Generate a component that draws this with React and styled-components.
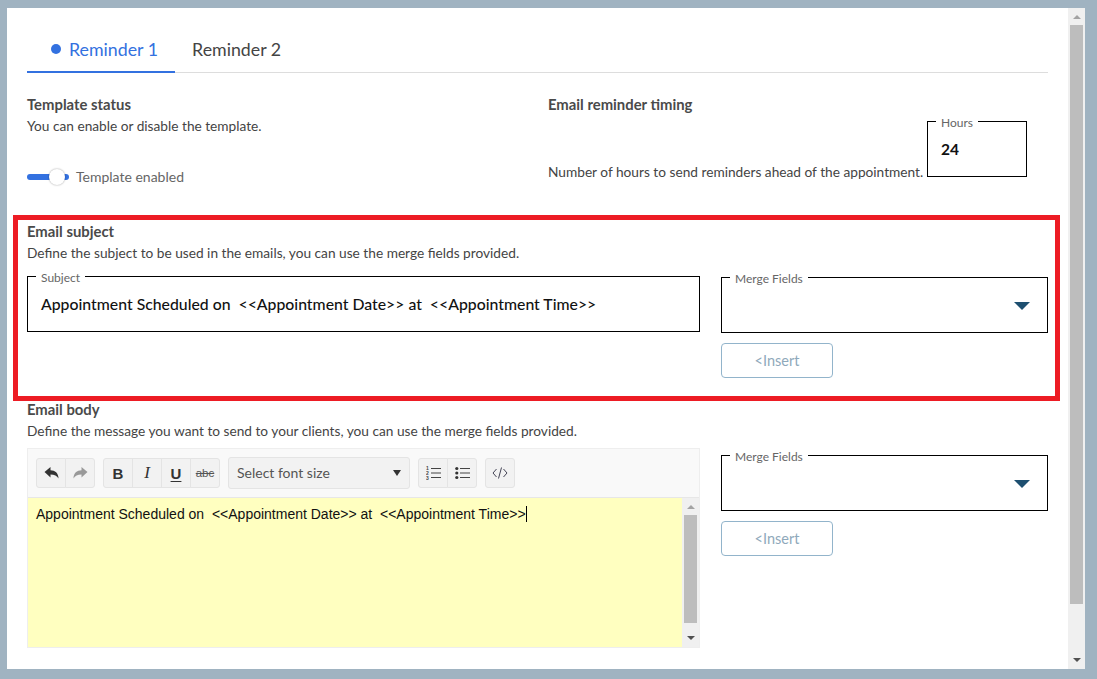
import React from "react";
import styled, { createGlobalStyle } from "styled-components";

const GlobalStyle = createGlobalStyle`
  html, body {
    margin: 0;
    height: 100%;
    overflow: hidden;
    background: #a0b3c1;
    font-family: Lato, "Open Sans", sans-serif;
    color: #444;
  }
`;

const Page = styled.div`
  box-sizing: border-box;
  width: 1097px;
  height: 679px;
  padding: 8px 12px 10px 7px;
`;

const Panel = styled.div`
  display: flex;
  height: 100%;
  background: #fff;
`;

const Content = styled.div`
  flex: 1;
  min-width: 0;
  padding: 0 20px;
  overflow: hidden;
`;

const Tabs = styled.div`
  display: flex;
  height: 65px;
  box-sizing: border-box;
  border-bottom: 1px solid #ddd;
`;

const Tab = styled.div`
  display: flex;
  align-items: center;
  gap: 8px;
  box-sizing: border-box;
  height: 65px;
  padding: 18px 17px 0 ${({ $active }) => ($active ? "24px" : "17px")};
  font-size: 17.8px;
  color: ${({ $active }) => ($active ? "#3371e0" : "#444")};
  border-bottom: 2px solid ${({ $active }) => ($active ? "#3371e0" : "transparent")};
`;

const Dot = styled.span`
  width: 10px;
  height: 10px;
  border-radius: 50%;
  background: #3371e0;
`;

const TopGrid = styled.div`
  display: grid;
  grid-template-columns: 521px 1fr;
  height: 142px;
  padding-top: 23px;
  box-sizing: border-box;
`;

const Column = styled.div`
  display: flex;
  flex-direction: column;
`;

const Heading = styled.div`
  font-size: 14.85px;
  font-weight: 700;
  line-height: 16px;
  color: #4a4a4a;
`;

const Hint = styled.div`
  font-size: 13.7px;
  line-height: 20px;
  margin-top: 4px;
  color: #444;
`;

const ToggleRow = styled.div`
  display: flex;
  align-items: center;
  gap: 7px;
  margin-top: 32px;
  font-size: 14px;
  color: #666;
`;

const Track = styled.div`
  position: relative;
  width: 42px;
  height: 6px;
  border-radius: 3px;
  background: #3371e0;
`;

const Knob = styled.div`
  position: absolute;
  left: 22px;
  top: -5px;
  width: 16px;
  height: 16px;
  border-radius: 50%;
  background: #fff;
  box-shadow: 0 0 2px rgba(0, 0, 0, 0.4);
`;

const TimingRow = styled.div`
  display: flex;
  align-items: flex-end;
`;

const TimingHint = styled(Hint)`
  flex: none;
  width: 379px;
  margin: 0 0 -5px;
  white-space: nowrap;
`;

const Field = styled.fieldset`
  box-sizing: border-box;
  margin: 0;
  padding: 0 13px;
  width: ${({ $width }) => $width || "auto"};
  height: 65px;
  border: 1px solid #000;
  min-width: 0;
`;

const Legend = styled.legend`
  margin-left: -5px;
  padding: 4px 5px 0;
  font-size: 12px;
  line-height: 14px;
  color: #666;
`;

const FieldValue = styled.div`
  font-size: ${({ $size }) => $size || 15.8}px;
  font-weight: ${({ $weight }) => $weight || 500};
  line-height: 20px;
  margin-top: 9px;
  color: #111;
  white-space: pre;
`;

const SubjectBox = styled.section`
  box-sizing: border-box;
  height: 186px;
  margin: 0 -12px 0 -14px;
  padding: 3px 7px 0 9px;
  border: 5px solid #ed1c24;
`;

const FormRow = styled.div`
  display: grid;
  grid-template-columns: 673px 327px;
  column-gap: 21px;
  margin-top: ${({ $top }) => $top}px;
`;

const MergeColumn = styled.div`
  display: flex;
  flex-direction: column;
  align-items: flex-start;
  gap: 10px;
  margin-top: ${({ $top }) => $top}px;
`;

const Caret = styled.div`
  margin: 16px 4px 0 auto;
  width: 0;
  height: 0;
  border-left: 8px solid transparent;
  border-right: 8px solid transparent;
  border-top: 8px solid #1d4f70;
`;

const InsertButton = styled.button`
  width: 112px;
  height: 35px;
  background: #fff;
  border: 1px solid #92b4cb;
  border-radius: 4px;
  font-family: inherit;
  font-size: 14.5px;
  color: #8fa9bb;
`;

const Editor = styled.div`
  box-sizing: border-box;
  height: 200px;
  border: 1px solid #eee;
  display: flex;
  flex-direction: column;
`;

const Toolbar = styled.div`
  display: flex;
  align-items: center;
  gap: 8px;
  height: 49px;
  box-sizing: border-box;
  padding: 0 8px;
  background: #f9f9f9;
  border-bottom: 1px solid #e7e7e7;
`;

const BtnGroup = styled.div`
  display: flex;
`;

const ToolBtn = styled.div`
  box-sizing: border-box;
  display: flex;
  align-items: center;
  justify-content: center;
  width: 30px;
  height: 30px;
  margin-left: -1px;
  background: #f2f2f2;
  border: 1px solid #e4e4e4;
  color: #333;
  font-family: "Liberation Sans", Arial, sans-serif;
  font-size: 15px;
  &:first-child { margin-left: 0; border-radius: 3px 0 0 3px; }
  &:last-child { border-radius: 0 3px 3px 0; }
  &:only-child { border-radius: 3px; }
`;

const BoldGlyph = styled.span`
  font-weight: 700;
`;

const ItalicGlyph = styled.span`
  font-style: italic;
  font-family: "Liberation Serif", serif;
  font-size: 17px;
`;

const UnderGlyph = styled.span`
  font-weight: 700;
  text-decoration: underline;
  text-underline-offset: 2px;
`;

const StrikeGlyph = styled.span`
  font-size: 11.5px;
  text-decoration: line-through;
  color: #555;
`;

const FontSelect = styled.div`
  box-sizing: border-box;
  display: flex;
  align-items: center;
  justify-content: space-between;
  width: 182px;
  height: 32px;
  padding: 0 8px 1px;
  background: #f2f2f2;
  border: 1px solid #e4e4e4;
  border-radius: 3px;
  font-size: 14px;
  color: #555;
`;

const SelectCaret = styled.span`
  width: 0;
  height: 0;
  border-left: 4px solid transparent;
  border-right: 4px solid transparent;
  border-top: 6px solid #333;
`;

const EditArea = styled.div`
  flex: 1;
  min-height: 0;
  display: flex;
  background: #ffffc0;
`;

const EditText = styled.div`
  flex: 1;
  padding: 8px;
  font-family: "Liberation Sans", Arial, sans-serif;
  font-size: 14px;
  line-height: 17px;
  color: #111;
  white-space: pre;
`;

const TextCursor = styled.span`
  border-left: 1px solid #000;
`;

const ScrollTrack = styled.div`
  flex: none;
  display: flex;
  flex-direction: column;
  align-items: center;
  box-sizing: border-box;
  width: 17px;
  background: #f0f0f0;
  padding: 7px 0;
`;

const ScrollThumb = styled.div`
  width: 13px;
  height: ${({ $height }) => $height}px;
  margin-top: 6px;
  background: #bdbdbd;
`;

const ScrollArrow = styled.div`
  width: 0;
  height: 0;
  border-left: 4px solid transparent;
  border-right: 4px solid transparent;
  ${({ $up }) => ($up ? "border-bottom: 4px solid #a3a3a3;" : "border-top: 4px solid #505050;")}
`;

const Spacer = styled.div`
  flex: 1;
`;

const ReplyIcon = ({ flip, color }) => (
  <svg width="15" height="12" viewBox="0 0 15 12" fill={color} style={flip ? { transform: "scaleX(-1)" } : undefined}>
    <path d="M0.5 5 6.5 0V3.2C11 3.2 14.5 6 14.5 11.5 13 8.8 10.5 7.4 6.5 7.4V10.5Z" />
  </svg>
);

const OrderedIcon = () => (
  <svg width="15" height="14" viewBox="0 0 15 14" fill="#444" stroke="none">
    <text x="0" y="4.4" fontSize="5" fontWeight="700" fontFamily="Liberation Sans">1</text>
    <text x="0" y="9" fontSize="5" fontWeight="700" fontFamily="Liberation Sans">2</text>
    <text x="0" y="13.6" fontSize="5" fontWeight="700" fontFamily="Liberation Sans">3</text>
    <path d="M5 2.5h10M5 7h10M5 11.5h10" stroke="#444" strokeWidth="1" />
  </svg>
);

const BulletIcon = () => (
  <svg width="15" height="14" viewBox="0 0 15 14" fill="#333">
    <circle cx="1.8" cy="2.5" r="1.6" />
    <circle cx="1.8" cy="7" r="1.6" />
    <circle cx="1.8" cy="11.5" r="1.6" />
    <path d="M5 2.5h10M5 7h10M5 11.5h10" stroke="#444" strokeWidth="1" />
  </svg>
);

const CodeIcon = () => (
  <svg width="16" height="12" viewBox="0 0 16 12" fill="none" stroke="#445" strokeWidth="1">
    <path d="M4.5 2 1 6l3.5 4M11.5 2 15 6l-3.5 4M9.5 .5 6.5 11.5" />
  </svg>
);

function MergeFields({ top }) {
  return (
    <MergeColumn $top={top}>
      <Field $width="327px">
        <Legend>Merge Fields</Legend>
        <Caret />
      </Field>
      <InsertButton>&lt;Insert</InsertButton>
    </MergeColumn>
  );
}

export default function App() {
  return (
    <Page>
      <GlobalStyle />
      <Panel>
        <Content>
          <Tabs>
            <Tab $active>
              <Dot />
              Reminder 1
            </Tab>
            <Tab>Reminder 2</Tab>
          </Tabs>

          <TopGrid>
            <Column>
              <Heading>Template status</Heading>
              <Hint>You can enable or disable the template.</Hint>
              <ToggleRow>
                <Track>
                  <Knob />
                </Track>
                Template enabled
              </ToggleRow>
            </Column>
            <Column>
              <Heading>Email reminder timing</Heading>
              <TimingRow>
                <TimingHint>Number of hours to send reminders ahead of the appointment.</TimingHint>
                <Field $width="100px">
                  <Legend>Hours</Legend>
                  <FieldValue $size={15.5} $weight={700}>24</FieldValue>
                </Field>
              </TimingRow>
            </Column>
          </TopGrid>

          <SubjectBox>
            <Heading>Email subject</Heading>
            <Hint>Define the subject to be used in the emails, you can use the merge fields provided.</Hint>
            <FormRow $top={4}>
              <Field>
                <Legend>Subject</Legend>
                <FieldValue>{"Appointment Scheduled on  <<Appointment Date>> at  <<Appointment Time>>"}</FieldValue>
              </Field>
              <MergeFields top={1} />
            </FormRow>
          </SubjectBox>

          <section>
            <Heading>Email body</Heading>
            <Hint>Define the message you want to send to your clients, you can use the merge fields provided.</Hint>
            <FormRow $top={7}>
              <Editor>
                <Toolbar>
                  <BtnGroup>
                    <ToolBtn><ReplyIcon color="#333" /></ToolBtn>
                    <ToolBtn><ReplyIcon flip color="#999" /></ToolBtn>
                  </BtnGroup>
                  <BtnGroup>
                    <ToolBtn><BoldGlyph>B</BoldGlyph></ToolBtn>
                    <ToolBtn><ItalicGlyph>I</ItalicGlyph></ToolBtn>
                    <ToolBtn><UnderGlyph>U</UnderGlyph></ToolBtn>
                    <ToolBtn><StrikeGlyph>abc</StrikeGlyph></ToolBtn>
                  </BtnGroup>
                  <FontSelect>
                    Select font size
                    <SelectCaret />
                  </FontSelect>
                  <BtnGroup>
                    <ToolBtn><OrderedIcon /></ToolBtn>
                    <ToolBtn><BulletIcon /></ToolBtn>
                  </BtnGroup>
                  <BtnGroup>
                    <ToolBtn><CodeIcon /></ToolBtn>
                  </BtnGroup>
                </Toolbar>
                <EditArea>
                  <EditText>
                    {"Appointment Scheduled on  <<Appointment Date>> at  <<Appointment Time>>"}
                    <TextCursor />
                  </EditText>
                  <ScrollTrack>
                    <ScrollArrow $up />
                    <ScrollThumb $height={108} />
                    <Spacer />
                    <ScrollArrow />
                  </ScrollTrack>
                </EditArea>
              </Editor>
              <MergeFields top={-2} />
            </FormRow>
          </section>
        </Content>

        <ScrollTrack>
          <ScrollArrow $up />
          <ScrollThumb $height={579} />
          <Spacer />
          <ScrollArrow />
        </ScrollTrack>
      </Panel>
    </Page>
  );
}
